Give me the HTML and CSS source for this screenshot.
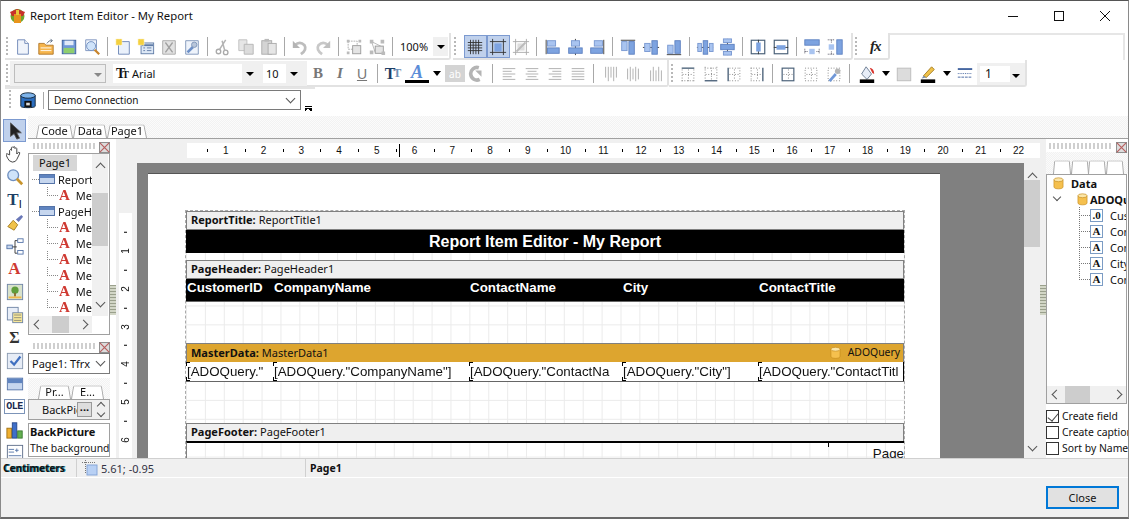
FILE: index.html
```html
<!DOCTYPE html>
<html lang="en">
  <head>
    <meta charset="UTF-8" />
    <title>Report Item Editor - My Report</title>
    <link rel="stylesheet" href="styles.css">
  </head>
  <body>
    <svg class="defs" width="0" height="0">
      <symbol id="new" viewBox="0 0 20 20"><path d="M4 2h8l4 4v12H4z" fill="#f0f4fb" stroke="#6b85b5"/><path d="M12 2v4h4" fill="#fff" stroke="#6b85b5"/></symbol>
      <symbol id="open" viewBox="0 0 20 20"><path d="M2 6h6l2 2h8v10H2z" fill="#f6b54c" stroke="#b0762a"/><path d="M4 11h12M4 14h12" stroke="#fff"/><path d="M11 6q2-4 6-3M15 1l2 2-2 2" stroke="#5a6a80" fill="none"/></symbol>
      <symbol id="save" viewBox="0 0 20 20"><rect x="2.5" y="2.5" width="15" height="15" fill="#7098d8" stroke="#3d5f9c"/><rect x="5" y="3" width="10" height="5" fill="#e2eaf8"/><rect x="4" y="11" width="12" height="6" fill="#8fce6e"/></symbol>
      <symbol id="preview" viewBox="0 0 20 20"><path d="M3 2h12v12H3z" fill="#eef3fb" stroke="#7c93bd"/><circle cx="9" cy="9" r="5" fill="#cfe3fa" stroke="#6f8fbf"/><path d="M13 13l5 5" stroke="#c8842c" stroke-width="2.5"/></symbol>
      <symbol id="newpage" viewBox="0 0 20 20"><path d="M5 4h12v14H5z" fill="#eaf1fb" stroke="#6b85b5"/><rect x="2" y="1" width="7" height="7" fill="#f4d03f" stroke="#fff" stroke-dasharray="1 1"/></symbol>
      <symbol id="newdlg" viewBox="0 0 20 20"><rect x="4.5" y="5.5" width="14" height="12" fill="#dde8f6" stroke="#5f7ba6"/><path d="M5 8h13" stroke="#5f7ba6" stroke-width="2"/><path d="M7 11h2M7 14h2M11 11h5M11 14h5" stroke="#5f7ba6"/><rect x="1" y="1" width="7" height="7" fill="#f4d03f" stroke="#fff" stroke-dasharray="1 1"/></symbol>
      <symbol id="delpage" viewBox="0 0 20 20"><path d="M3 3h14v15H3z" fill="#e2e2e2" stroke="#a8a8a8"/><path d="M6 5l8 11M14 5L6 16" stroke="#a0a0a0" stroke-width="1.5"/></symbol>
      <symbol id="pageopt" viewBox="0 0 20 20"><path d="M3 3h14v15H3z" fill="#eef3fb" stroke="#7d94b8"/><path d="M5 16l6-6" stroke="#6d90c8" stroke-width="3"/><circle cx="12.5" cy="7.5" r="3" fill="#b8c6da" stroke="#7d94b8"/></symbol>
      <symbol id="cut" viewBox="0 0 20 20"><circle cx="5" cy="15" r="2.5" fill="none" stroke="#aaa" stroke-width="1.5"/><circle cx="13" cy="16" r="2.5" fill="none" stroke="#aaa" stroke-width="1.5"/><path d="M6 13l7-11M12 14L9 3" stroke="#b4b4b4" stroke-width="1.7"/></symbol>
      <symbol id="copy" viewBox="0 0 20 20"><path d="M2 2h9v12H2z" fill="#e6e6e6" stroke="#c0c0c0"/><path d="M8 7h10v11H8z" fill="#dcdcdc" stroke="#b4b4b4"/></symbol>
      <symbol id="paste" viewBox="0 0 20 20"><rect x="2" y="3" width="11" height="15" fill="#d4d4d4" stroke="#aaa"/><rect x="9" y="6" width="9" height="12" fill="#e6e6e6" stroke="#aaa"/><rect x="5" y="1" width="5" height="3" fill="#bbb"/></symbol>
      <symbol id="undo" viewBox="0 0 20 20"><path d="M4 8q6-5 11 0q3 5-4 10" fill="none" stroke="#bdbdbd" stroke-width="3"/><path d="M2 3v8h8z" fill="#b4b4b4"/></symbol>
      <symbol id="redo" viewBox="0 0 20 20"><path d="M16 8q-6-5-11 0q-3 5 4 10" fill="none" stroke="#c8c8c8" stroke-width="3"/><path d="M18 3v8h-8z" fill="#c0c0c0"/></symbol>
      <symbol id="group" viewBox="0 0 20 20"><rect x="3.5" y="3.5" width="10" height="9" fill="none" stroke="#aaa" stroke-dasharray="2 1"/><rect x="8.5" y="8.5" width="9" height="9" fill="#e4e4e4" stroke="#999"/><path d="M2 2h3v3H2zM15 2h3v3h-3zM2 15h3v3H2z" fill="#bbb"/></symbol>
      <symbol id="ungroup" viewBox="0 0 20 20"><path d="M4 4l12 6M4 4l4 12M16 10l-2 7" stroke="#b4b4b4"/><rect x="8" y="9" width="9" height="8" fill="#e4e4e4" stroke="#999"/><path d="M2 2h4v4H2zM14 2h4v4h-4zM2 14h4v4H2zM15 15h4v4h-4z" fill="#bbb"/></symbol>
      <symbol id="grid" viewBox="0 0 20 20"><path d="M2 5h16M2 8h16M2 11h16M2 14h16M5 2v16M8 2v16M11 2v16M14 2v16" stroke="#333"/></symbol>
      <symbol id="snap" viewBox="0 0 20 20"><rect x="6" y="6" width="8" height="9" fill="#7da3e0"/><path d="M1 4h18M1 16h18M4 1v18M16 1v18" stroke="#333"/></symbol>
      <symbol id="fit" viewBox="0 0 20 20"><path d="M1 4h18M1 16h18M4 1v18M16 1v18" stroke="#aaa"/><rect x="6" y="6" width="8" height="8" fill="#ddd"/><path d="M5 15L15 5" stroke="#bbb" stroke-width="2"/></symbol>
      <symbol id="al" viewBox="0 0 20 20"><path d="M3.5 2v16" stroke="#333"/><rect x="5" y="3" width="9" height="6" fill="#a9c4f0" stroke="#7797d0"/><rect x="5" y="11" width="13" height="6" fill="#7da3e0" stroke="#5c80c0"/></symbol>
      <symbol id="ac" viewBox="0 0 20 20"><path d="M10.5 1v18" stroke="#333"/><rect x="6" y="3" width="9" height="6" fill="#a9c4f0" stroke="#7797d0"/><rect x="3" y="11" width="15" height="6" fill="#7da3e0" stroke="#5c80c0"/></symbol>
      <symbol id="ar" viewBox="0 0 20 20"><path d="M17.5 2v16" stroke="#333"/><rect x="7" y="3" width="9" height="6" fill="#a9c4f0" stroke="#7797d0"/><rect x="3" y="11" width="13" height="6" fill="#7da3e0" stroke="#5c80c0"/></symbol>
      <symbol id="at" viewBox="0 0 20 20"><path d="M2 2.5h16" stroke="#333"/><rect x="3" y="4" width="6" height="10" fill="#a9c4f0" stroke="#7797d0"/><rect x="11" y="4" width="6" height="14" fill="#7da3e0" stroke="#5c80c0"/></symbol>
      <symbol id="am" viewBox="0 0 20 20"><path d="M1 10.5h18" stroke="#333"/><rect x="3" y="6" width="6" height="9" fill="#a9c4f0" stroke="#7797d0"/><rect x="11" y="3" width="6" height="15" fill="#7da3e0" stroke="#5c80c0"/></symbol>
      <symbol id="ab" viewBox="0 0 20 20"><path d="M2 18.5h16" stroke="#333"/><rect x="3" y="8" width="6" height="9" fill="#a9c4f0" stroke="#7797d0"/><rect x="11" y="3" width="6" height="14" fill="#7da3e0" stroke="#5c80c0"/></symbol>
      <symbol id="sh" viewBox="0 0 20 20"><path d="M1 10.5h18M10.5 6v9" stroke="#444"/><rect x="2" y="6" width="4" height="9" fill="#a9c4f0" stroke="#7797d0"/><rect x="8" y="3" width="5" height="15" fill="#7da3e0" stroke="#5c80c0"/><rect x="15" y="6" width="4" height="9" fill="#a9c4f0" stroke="#7797d0"/></symbol>
      <symbol id="sv" viewBox="0 0 20 20"><path d="M10.5 1v18" stroke="#444"/><rect x="6" y="1" width="9" height="4" fill="#a9c4f0" stroke="#7797d0"/><rect x="3" y="7" width="15" height="6" fill="#7da3e0" stroke="#5c80c0"/><rect x="6" y="15" width="9" height="4" fill="#a9c4f0" stroke="#7797d0"/></symbol>
      <symbol id="ch" viewBox="0 0 20 20"><rect x="2.5" y="2.5" width="15" height="15" fill="#fff" stroke="#4a6078" stroke-width="1.3"/><path d="M10.5 2v16" stroke="#333"/><rect x="8" y="5" width="5" height="10" fill="#7da3e0"/></symbol>
      <symbol id="cv" viewBox="0 0 20 20"><rect x="2.5" y="2.5" width="15" height="15" fill="#fff" stroke="#4a6078" stroke-width="1.3"/><path d="M2 10.5h16" stroke="#333"/><rect x="5" y="8" width="10" height="5" fill="#7da3e0"/></symbol>
      <symbol id="sw" viewBox="0 0 20 20"><rect x="2" y="2" width="16" height="6" fill="#7da3e0" stroke="#5c80c0"/><rect x="7" y="12" width="6" height="6" fill="#a9c4f0"/><path d="M2 15h3M15 15h3M2 12v6M18 12v6" stroke="#445" stroke-dasharray="1 1"/></symbol>
      <symbol id="shh" viewBox="0 0 20 20"><rect x="12" y="2" width="6" height="16" fill="#7da3e0" stroke="#5c80c0"/><rect x="3" y="7" width="6" height="6" fill="#a9c4f0"/><path d="M6 2v3M6 15v3M2 2h7M2 18h7" stroke="#445" stroke-dasharray="1 1"/></symbol>
      <symbol id="tl" viewBox="0 0 20 20"><path d="M3 4h14M3 7h10M3 10h14M3 13h10M3 16h14" stroke="#aaa"/></symbol>
      <symbol id="tc" viewBox="0 0 20 20"><path d="M3 4h14M5 7h10M3 10h14M5 13h10M3 16h14" stroke="#aaa"/></symbol>
      <symbol id="tr" viewBox="0 0 20 20"><path d="M3 4h14M7 7h10M3 10h14M7 13h10M3 16h14" stroke="#aaa"/></symbol>
      <symbol id="tj" viewBox="0 0 20 20"><path d="M3 4h14M3 7h14M3 10h14M3 13h14M3 16h14" stroke="#aaa"/></symbol>
      <symbol id="vt" viewBox="0 0 20 20"><path d="M4 2v12M7 2v16M10 2v12M13 2v16M16 2v12" stroke="#aaa"/></symbol>
      <symbol id="vc" viewBox="0 0 20 20"><path d="M4 4v12M7 2v16M10 4v12M13 2v16M16 4v12" stroke="#aaa"/></symbol>
      <symbol id="vb" viewBox="0 0 20 20"><path d="M4 6v12M7 2v16M10 6v12M13 2v16M16 6v12" stroke="#aaa"/></symbol>
      <symbol id="ft" viewBox="0 0 20 20"><path d="M3 3.5h14" stroke="#4a6078" stroke-width="1.5"/><path d="M3.5 5v13M16.5 5v13M3 17.5h14M10.5 5v13M4 10.5h12" stroke="#777" stroke-dasharray="1 2"/></symbol>
      <symbol id="fb" viewBox="0 0 20 20"><path d="M3 17.5h14" stroke="#4a6078" stroke-width="1.5"/><path d="M3.5 2v14M16.5 2v14M3 3.5h14M10.5 3v13M4 10.5h12" stroke="#777" stroke-dasharray="1 2"/></symbol>
      <symbol id="fl" viewBox="0 0 20 20"><path d="M3.5 3v15" stroke="#4a6078" stroke-width="1.5"/><path d="M5 3.5h12M5 17.5h12M16.5 3v15M10.5 5v11M5 10.5h11" stroke="#777" stroke-dasharray="1 2"/></symbol>
      <symbol id="fr" viewBox="0 0 20 20"><path d="M16.5 3v15" stroke="#4a6078" stroke-width="1.5"/><path d="M3 3.5h12M3 17.5h12M3.5 3v15M10.5 5v11M4 10.5h11" stroke="#777" stroke-dasharray="1 2"/></symbol>
      <symbol id="fa" viewBox="0 0 20 20"><rect x="3.5" y="3.5" width="13" height="14" fill="none" stroke="#4a6078" stroke-width="1.3"/><path d="M10.5 5v11M5 10.5h11" stroke="#777" stroke-dasharray="1 2"/></symbol>
      <symbol id="fn" viewBox="0 0 20 20"><rect x="3.5" y="3.5" width="13" height="14" fill="none" stroke="#777" stroke-dasharray="1 2"/><path d="M10.5 5v11M5 10.5h11" stroke="#777" stroke-dasharray="1 2"/></symbol>
      <symbol id="fs" viewBox="0 0 20 20"><rect x="3.5" y="3.5" width="13" height="14" fill="none" stroke="#777" stroke-dasharray="1 2"/><path d="M5 18l7-8" stroke="#7098d8" stroke-width="3"/><circle cx="14" cy="7" r="3" fill="#b5b5b5"/></symbol>
      <symbol id="fill" viewBox="0 0 20 20"><path d="M9 2l6 8-5 6-6-6z" fill="#e8eef8" stroke="#66788f"/><path d="M13 3q5 1 5 7l-2-1z" fill="#d8322a"/><rect x="2" y="16" width="16" height="4" fill="#000"/></symbol>
      <symbol id="square" viewBox="0 0 20 20"><rect x="2.5" y="3.5" width="15" height="14" fill="#dcdcdc" stroke="#bbb"/></symbol>
      <symbol id="pen" viewBox="0 0 20 20"><path d="M5 12l9-10 3 3-9 9z" fill="#f0c24a" stroke="#a27a20"/><path d="M3 15l2-3 3 2z" fill="#7a90b4"/><rect x="2" y="16" width="16" height="4" fill="#000"/></symbol>
      <symbol id="lines" viewBox="0 0 20 20"><path d="M2 4.5h16" stroke="#3d5f9c" stroke-width="2"/><path d="M2 9.5h16" stroke="#3d5f9c" stroke-dasharray="1 1"/><path d="M2 13.5h16" stroke="#3d5f9c" stroke-dasharray="3 1"/></symbol>
      <symbol id="rotate" viewBox="0 0 20 20"><path d="M12 3a7 7 0 1 0 1 13" fill="none" stroke="#b4b4b4" stroke-width="4"/><path d="M8 6h7v7z" fill="#b4b4b4"/></symbol>
      <symbol id="db" viewBox="0 0 20 20"><path d="M3 5v11c0 4 14 4 14 0V5z" fill="#f5c04e" stroke="#c58a1c"/><ellipse cx="10" cy="5" rx="7" ry="3" fill="#fbe6a8" stroke="#c58a1c"/></symbol>
      <symbol id="conn" viewBox="0 0 20 20"><path d="M2 5v12c0 2 16 2 16 0V5z" fill="#2d6fc0" stroke="#123"/><ellipse cx="10" cy="5" rx="8" ry="3" fill="#7db3ea" stroke="#123"/><rect x="6" y="11" width="8" height="7" fill="#111"/><rect x="8" y="13" width="4" height="3" fill="#ddd"/></symbol>
      <symbol id="bandi" viewBox="0 0 16 10"><rect x="0.5" y="0.5" width="15" height="9" fill="#c6d6ee" stroke="#5574a8"/><rect x="1" y="1" width="14" height="3" fill="#5f84c0"/></symbol>
      <symbol id="closebox" viewBox="0 0 12 12"><rect x="0.5" y="0.5" width="11" height="11" fill="#ddd" stroke="#888"/><path d="M1 1l10 10M11 1L1 11" stroke="#b86060" stroke-width="1.3"/></symbol>
      <symbol id="arrow" viewBox="0 0 20 20"><path d="M5 1v15l4-3 3 6 3-1-3-6h5z" fill="#222" stroke="#555"/></symbol>
      <symbol id="hand" viewBox="0 0 20 20"><path d="M4 11V6q1-2 2 0V3q1-2 2 0v-.5q1-1.500 2 0V4q1-2 2 0v6l2-2q2 0 1 2l-3 6q-1 3-5 3-4-1-5-4l-2-4q0-2 2-1z" fill="#fff" stroke="#333"/></symbol>
      <symbol id="zoom" viewBox="0 0 20 20"><circle cx="8" cy="8" r="6" fill="#cfe3fa" stroke="#6f8fbf" stroke-width="1.5"/><path d="M12 12l6 6" stroke="#c8942c" stroke-width="3"/></symbol>
      <symbol id="brush" viewBox="0 0 20 20"><path d="M2 14l6-7 5 5-4 6z" fill="#f0c24a" stroke="#a27a20"/><path d="M11 6l6-5 2 2-5 6z" fill="#6a78b8"/></symbol>
      <symbol id="tree" viewBox="0 0 20 20"><rect x="1" y="9" width="6" height="4" fill="#c6d6ee" stroke="#5574a8"/><path d="M7 11h5M10 4v14M10 4h3M10 18h3" stroke="#333"/><rect x="13" y="2" width="6" height="4" fill="#fff" stroke="#5574a8"/><rect x="13" y="15" width="6" height="4" fill="#fff" stroke="#5574a8"/></symbol>
      <symbol id="pic" viewBox="0 0 20 20"><rect x="1.5" y="1.5" width="17" height="17" fill="#d8e2cc" stroke="#6f84a4"/><circle cx="10" cy="8" r="4" fill="#5f9e3c"/><rect x="9" y="11" width="2" height="4" fill="#8a6a2c"/><rect x="3" y="15" width="14" height="2" fill="#f0b84a"/></symbol>
      <symbol id="subrep" viewBox="0 0 20 20"><rect x="1.5" y="1.5" width="12" height="14" fill="#e8eef8" stroke="#6f84a4"/><rect x="7.5" y="7.5" width="11" height="11" fill="#f8e89a" stroke="#6f84a4"/><path d="M9 10h8M9 13h8M9 16h8" stroke="#887"/></symbol>
      <symbol id="checkbox" viewBox="0 0 20 20"><rect x="1.5" y="1.5" width="17" height="17" fill="#e6ecf6" stroke="#8898b0"/><path d="M5 10l4 4 7-9" fill="none" stroke="#3f6fc0" stroke-width="2.5"/></symbol>
      <symbol id="bandtool" viewBox="0 0 20 20"><rect x="1.5" y="3.5" width="17" height="13" fill="#c6d6ee" stroke="#5574a8"/><rect x="2" y="4" width="16" height="5" fill="#5f84c0"/></symbol>
      <symbol id="chart" viewBox="0 0 20 20"><rect x="1" y="8" width="5" height="11" fill="#f0b030" stroke="#a07010"/><rect x="7" y="2" width="5" height="17" fill="#3f6fc8" stroke="#24478c"/><rect x="13" y="11" width="5" height="8" fill="#64b050" stroke="#3a7a30"/></symbol>
      <symbol id="cross" viewBox="0 0 20 20"><rect x="1.5" y="1.5" width="17" height="17" fill="#fff" stroke="#5c6c88"/><path d="M3 6h6M3 9h6M12 5v4M10 7h4M3 13h14M3 16h14" stroke="#5574a8"/></symbol>
      <symbol id="coord" viewBox="0 0 16 16"><path d="M0 2.5h14M3.5 0v14" stroke="#777" stroke-dasharray="1 1"/><rect x="5" y="5" width="10" height="10" fill="#b8d0f4" stroke="#86a6d8"/></symbol>
    </svg>

    <div class="window">
      <div class="titlebar">
        <svg class="appicon" width="17" height="17" viewBox="0 0 17 17">
          <circle cx="8.5" cy="9" r="7" fill="#6fa52c"/>
          <path d="M1 5l7-3 8 3-2 4H3z" fill="#c8322a"/>
          <path d="M5 7h7v9H5z" fill="#e8941c"/>
          <path d="M7 3h3v5H7z" fill="#e8c83c"/>
        </svg>
        <span class="title">Report Item Editor - My Report</span>
        <div class="winbtns">
          <svg width="46" height="30" viewBox="0 0 46 30"><path d="M18 15.5h10" stroke="#111"/></svg>
          <svg width="46" height="30" viewBox="0 0 46 30"><rect x="18.5" y="10.5" width="9" height="9" fill="none" stroke="#111"/></svg>
          <svg width="46" height="30" viewBox="0 0 46 30"><path d="M18 10l10 10M28 10L18 20" stroke="#111"/></svg>
        </div>
      </div>

      <div class="tbrow row-one">
        <div class="tb">
          <i class="grip"></i>
          <div class="group wide">
            <span class="btn"><svg><use href="#new"/></svg></span>
            <span class="btn"><svg><use href="#open"/></svg></span>
            <span class="btn"><svg><use href="#save"/></svg></span>
            <span class="btn"><svg><use href="#preview"/></svg></span>
            <i class="sep"></i>
            <span class="btn"><svg><use href="#newpage"/></svg></span>
            <span class="btn"><svg><use href="#newdlg"/></svg></span>
            <span class="btn"><svg><use href="#delpage"/></svg></span>
            <span class="btn"><svg><use href="#pageopt"/></svg></span>
            <i class="sep"></i>
            <span class="btn"><svg><use href="#cut"/></svg></span>
            <span class="btn"><svg><use href="#copy"/></svg></span>
            <span class="btn"><svg><use href="#paste"/></svg></span>
            <i class="sep"></i>
            <span class="btn"><svg><use href="#undo"/></svg></span>
            <span class="btn"><svg><use href="#redo"/></svg></span>
            <i class="sep"></i>
            <span class="btn"><svg><use href="#group"/></svg></span>
            <span class="btn"><svg><use href="#ungroup"/></svg></span>
            <i class="sep"></i>
            <div class="tbcombo zoomcombo"><span>100%</span><b class="drop"></b></div>
          </div>
        </div>
        <div class="tb tb-align">
          <i class="grip"></i>
          <div class="group">
            <span class="btn on"><svg><use href="#grid"/></svg></span>
            <span class="btn on"><svg><use href="#snap"/></svg></span>
            <span class="btn"><svg><use href="#fit"/></svg></span>
            <i class="sep"></i>
            <span class="btn"><svg><use href="#al"/></svg></span>
            <span class="btn"><svg><use href="#ac"/></svg></span>
            <span class="btn"><svg><use href="#ar"/></svg></span>
            <i class="sep"></i>
            <span class="btn"><svg><use href="#at"/></svg></span>
            <span class="btn"><svg><use href="#am"/></svg></span>
            <span class="btn"><svg><use href="#ab"/></svg></span>
            <i class="sep"></i>
            <span class="btn"><svg><use href="#sh"/></svg></span>
            <span class="btn"><svg><use href="#sv"/></svg></span>
            <i class="sep"></i>
            <span class="btn"><svg><use href="#ch"/></svg></span>
            <span class="btn"><svg><use href="#cv"/></svg></span>
            <i class="sep"></i>
            <span class="btn"><svg><use href="#sw"/></svg></span>
            <span class="btn"><svg><use href="#shh"/></svg></span>
          </div>
        </div>
        <div class="tb tb-fx">
          <i class="grip"></i>
          <span class="fx">fx</span>
        </div>
        <div class="tb-rest"></div>
      </div>

      <div class="tbrow row-two">
        <div class="tb tb-text">
          <i class="grip"></i>
          <div class="combos">
            <div class="tbcombo stylecombo"><b class="drop grey"></b></div>
            <div class="tbcombo fontcombo"><span class="tt">T<small>T</small></span><span>Arial</span><b class="drop"></b></div>
            <div class="tbcombo sizecombo"><span>10</span><b class="drop"></b></div>
          </div>
          <span class="btn w22 letter bold">B</span>
          <span class="btn w22 letter italic">I</span>
          <span class="btn w22 letter under">U</span>
          <i class="sep"></i>
          <span class="btn w24 letter fontsize">T<small>T</small></span>
          <span class="btn w24 letter fontcolor">A</span>
          <span class="btn w16"><b class="drop bare"></b></span>
          <span class="btn w20 abbox">ab</span>
          <span class="btn w23"><svg><use href="#rotate"/></svg></span>
          <i class="sep"></i>
          <i class="gap2"></i>
          <span class="btn"><svg><use href="#tl"/></svg></span>
          <span class="btn"><svg><use href="#tc"/></svg></span>
          <span class="btn"><svg><use href="#tr"/></svg></span>
          <span class="btn"><svg><use href="#tj"/></svg></span>
          <i class="sep"></i>
          <i class="gap2"></i>
          <span class="btn"><svg><use href="#vt"/></svg></span>
          <span class="btn"><svg><use href="#vc"/></svg></span>
          <span class="btn"><svg><use href="#vb"/></svg></span>
        </div>
        <div class="tb tb-frame">
          <i class="grip"></i>
          <span class="btn w23"><svg><use href="#ft"/></svg></span>
          <span class="btn w23"><svg><use href="#fb"/></svg></span>
          <span class="btn w23"><svg><use href="#fl"/></svg></span>
          <span class="btn w23"><svg><use href="#fr"/></svg></span>
          <i class="sep"></i>
          <span class="btn w23"><svg><use href="#fa"/></svg></span>
          <span class="btn w23"><svg><use href="#fn"/></svg></span>
          <span class="btn w23"><svg><use href="#fs"/></svg></span>
          <i class="sep"></i>
          <span class="btn w27"><svg><use href="#fill"/></svg></span>
          <span class="btn w11"><b class="drop bare"></b></span>
          <span class="btn w25"><svg><use href="#square"/></svg></span>
          <span class="btn w23"><svg><use href="#pen"/></svg></span>
          <span class="btn w15"><b class="drop bare"></b></span>
          <span class="btn w21"><svg><use href="#lines"/></svg></span>
          <div class="tbcombo linecombo"><span>1</span><b class="drop"></b></div>
        </div>
      </div>

      <div class="tbrow row-three">
        <i class="grip"></i>
        <span class="connicon"><svg><use href="#conn"/></svg></span>
        <i class="sep"></i>
        <div class="conncombo"><span>Demo Connection</span><i class="chev"></i></div>
        <span class="overflow"></span>
      </div>

      <div class="body">
        <div class="tools">
          <span class="tool on"><svg><use href="#arrow"/></svg></span>
          <span class="tool"><svg><use href="#hand"/></svg></span>
          <span class="tool"><svg><use href="#zoom"/></svg></span>
          <span class="tool texttool">T<small>I</small></span>
          <span class="tool"><svg><use href="#brush"/></svg></span>
          <span class="tool"><svg><use href="#tree"/></svg></span>
          <span class="tool redA">A</span>
          <span class="tool"><svg><use href="#pic"/></svg></span>
          <span class="tool"><svg><use href="#subrep"/></svg></span>
          <span class="tool sigma">Σ</span>
          <span class="tool"><svg><use href="#checkbox"/></svg></span>
          <span class="tool"><svg><use href="#bandtool"/></svg></span>
          <span class="tool ole">OLE</span>
          <span class="tool"><svg><use href="#chart"/></svg></span>
          <span class="tool"><svg><use href="#cross"/></svg></span>
        </div>

        <div class="main">
          <div class="tabstrip">
            <span class="tab">Code</span>
            <span class="tab">Data</span>
            <span class="tab active">Page1</span>
          </div>

          <div class="work">
            <div class="leftpanel">
              <div class="panelgrip"><svg class="closebox"><use href="#closebox"/></svg></div>
              <div class="treebox">
                <div class="tree">
                  <div class="node selected"><span>Page1</span></div>
                  <div class="node lvl1"><svg class="bandi"><use href="#bandi"/></svg>Report</div>
                  <div class="node lvl2"><span class="redA small">A</span>Me</div>
                  <div class="node lvl1"><svg class="bandi"><use href="#bandi"/></svg>PageHe</div>
                  <div class="node lvl2"><span class="redA small">A</span>Me</div>
                  <div class="node lvl2"><span class="redA small">A</span>Me</div>
                  <div class="node lvl2"><span class="redA small">A</span>Me</div>
                  <div class="node lvl2"><span class="redA small">A</span>Me</div>
                  <div class="node lvl2"><span class="redA small">A</span>Me</div>
                  <div class="node lvl2"><span class="redA small">A</span>Me</div>
                </div>
                <div class="vscroll treescroll"><i class="chev up"></i><i class="thumb"></i><i class="chev"></i></div>
                <div class="hscroll treehscroll"><i class="chev left"></i><i class="thumb"></i><i class="chev right"></i></div>
              </div>
              <div class="panelgrip second"><svg class="closebox"><use href="#closebox"/></svg></div>
              <div class="objcombo"><span>Page1: Tfrx</span><i class="chev"></i></div>
              <div class="proptabs">
                <span class="tab">Pr...</span>
                <span class="tab">E...</span>
              </div>
              <div class="proprow">
                <span class="propname">BackPic</span>
                <span class="ellipsis">...</span>
                <span class="spin"><i class="chev up"></i><i class="chev"></i></span>
              </div>
              <div class="propdesc">
                <b>BackPicture</b>
                <span>The background</span>
              </div>
            </div>

            <div class="splitter left"><i></i></div>

            <div class="designer">
              <div class="rulerrow">
                <div class="hruler">
                  <span>1</span><span>2</span><span>3</span><span>4</span><span>5</span><span>6</span><span>7</span><span>8</span><span>9</span><span>10</span><span>11</span>
                  <span>12</span><span>13</span><span>14</span><span>15</span><span>16</span><span>17</span><span>18</span><span>19</span><span>20</span><span>21</span><span>22</span>
                  <i class="marker"></i>
                </div>
              </div>
              <div class="designrow">
                <div class="vgutter">
                  <div class="vruler">
                    <span>1</span><span>2</span><span>3</span><span>4</span><span>5</span><span>6</span>
                  </div>
                </div>
                <div class="canvas">
                  <div class="page">
                    <div class="report">
                      <div class="bandhead"><b>ReportTitle:</b> ReportTitle1</div>
                      <div class="titlebox">Report Item Editor - My Report</div>
                      <div class="bandgap"></div>
                      <div class="bandhead"><b>PageHeader:</b> PageHeader1</div>
                      <div class="cols headcols">
                        <span>CustomerID</span><span>CompanyName</span><span>ContactName</span><span>City</span><span>ContactTitle</span>
                      </div>
                      <div class="bandgap g41"></div>
                      <div class="bandhead master"><b>MasterData:</b> MasterData1
                        <span class="source"><svg><use href="#db"/></svg>ADOQuery</span>
                      </div>
                      <div class="cols datacols">
                        <span>[ADOQuery."</span><span>[ADOQuery."CompanyName"]</span><span>[ADOQuery."ContactNa</span><span>[ADOQuery."City"]</span><span>[ADOQuery."ContactTitl</span>
                      </div>
                      <div class="bandgap g41"></div>
                      <div class="bandhead"><b>PageFooter:</b> PageFooter1</div>
                      <div class="footer"><span class="footcell">Page</span></div>
                    </div>
                  </div>
                </div>
                <div class="vscroll mainscroll"><i class="chev up"></i><i class="thumb"></i><i class="chev"></i></div>
              </div>
            </div>

            <div class="splitter right"><i></i></div>

            <div class="rightpanel">
              <div class="panelgrip"><svg class="closebox"><use href="#closebox"/></svg></div>
              <div class="datatabs"><span class="tab"></span><span class="tab"></span><span class="tab"></span><span class="tab"></span></div>
              <div class="databox">
                <div class="datatree">
                  <div class="dnode"><svg class="dbi"><use href="#db"/></svg><b>Data</b></div>
                  <div class="dnode query"><i class="chev"></i><svg class="dbi"><use href="#db"/></svg><b>ADOQu</b></div>
                  <div class="dnode field"><span class="fieldi num">.0</span>Cus</div>
                  <div class="dnode field"><span class="fieldi">A</span>Con</div>
                  <div class="dnode field"><span class="fieldi">A</span>Con</div>
                  <div class="dnode field"><span class="fieldi">A</span>City</div>
                  <div class="dnode field"><span class="fieldi">A</span>Con</div>
                </div>
                <div class="hscroll datahscroll"><i class="chev left"></i><i class="thumb"></i><i class="chev right"></i></div>
              </div>
              <div class="checks">
                <label><i class="box checked"></i>Create field</label>
                <label><i class="box"></i>Create caption</label>
                <label><i class="box"></i>Sort by Name</label>
              </div>
            </div>
          </div>
        </div>
      </div>

      <div class="statusbar">
        <span class="st-units">Centimeters</span>
        <span class="st-pos"><svg width="16" height="16"><use href="#coord"/></svg>5.61; -0.95</span>
        <span class="st-page">Page1</span>
      </div>
      <div class="footerbar">
        <button class="closebtn">Close</button>
      </div>
    </div>
  </body>
</html>
```

FILE: styles.css
```css
* {
  box-sizing: border-box;
}
html,
body {
  margin: 0;
  height: 100%;
  overflow: hidden;
}
body {
  font-family: "Noto Sans", Tahoma, sans-serif;
  font-size: 11px;
  color: #111;
  background: #fff;
}
i {
  font-style: normal;
}
.defs {
  position: absolute;
}
.window {
  width: 1129px;
  height: 519px;
  display: flex;
  flex-direction: column;
  overflow: hidden;
  background: #fff;
  border-top: 1px solid #555;
  border-bottom: 2px solid #6a6a6a;
  border-left: 1px solid #8a8a8a;
  border-right: 1px solid #8a8a8a;
}

/* title bar */
.titlebar {
  height: 32px;
  flex: none;
  display: flex;
  align-items: center;
  padding: 0 0 3px 8px;
}
.title {
  margin-left: 4px;
  font-size: 11.3px;
}
.winbtns {
  margin-left: auto;
  display: flex;
}
.winbtns svg {
  display: block;
}

/* toolbars */
.tbrow {
  display: flex;
  flex: none;
  align-items: stretch;
}
.row-one {
  height: 27px;
  padding-left: 4px;
}
.row-two {
  height: 27px;
  padding-left: 4px;
}
.row-three {
  height: 29px;
  margin-left: 4px;
  width: 310px;
  border-top: 2px solid #e4e4e4;
  padding-bottom: 5px;
  align-items: center;
  position: relative;
}
.tb {
  display: flex;
  align-items: center;
  padding-top: 2px;
  border-right: 2px solid #e2e2e2;
  border-bottom: 2px solid #e2e2e2;
  border-radius: 0 0 3px 0;
}
.grip {
  width: 2px;
  height: 20px;
  flex: none;
  margin-left: 1px;
  background: repeating-linear-gradient(#b8b8b8 0 2px, transparent 2px 4px);
}
.group {
  display: flex;
  align-items: center;
  height: 100%;
}
.row-one .tb:first-child {
  width: 446px;
}
.row-one .tb:first-child .group {
  margin-left: 3px;
}
.tb-align {
  width: 400px;
  margin-left: 2px;
}
.tb-align .group {
  margin-left: 8px;
}
.tb-fx {
  width: 36px;
  margin-left: 1px;
}
.tb-rest {
  flex: 1;
  margin-right: 3px;
  border-top: 2px solid #e6e6e6;
  border-right: 2px solid #e6e6e6;
}
.fx {
  margin-left: 13px;
  font: italic bold 15px "Liberation Serif", serif;
  letter-spacing: -1px;
  color: #222;
}
.btn {
  width: 22.8px;
  height: 23px;
  flex: none;
  display: flex;
  align-items: center;
  justify-content: center;
}
.wide .btn {
  width: 23px;
}
.btn svg,
.tool svg,
.connicon svg {
  width: 18px;
  height: 18px;
  display: block;
}
.btn.on {
  background: #c0d1ec;
  border: 1px solid #7c9ad0;
}
.w11 {
  width: 11px;
}
.w15 {
  width: 15px;
}
.w16 {
  width: 16px;
}
.w20 {
  width: 20px;
}
.w21 {
  width: 21px;
}
.w22 {
  width: 22px;
}
.w23 {
  width: 23px;
}
.w24 {
  width: 24px;
}
.w25 {
  width: 25px;
}
.w27 {
  width: 27px;
}
.sep {
  width: 8px;
  flex: none;
  height: 19px;
  background: linear-gradient(#a8a8a8, #a8a8a8) center / 1px 100% no-repeat;
}
.gap2 {
  width: 2px;
  flex: none;
}
.tb-text {
  width: 664px;
}
.tb-frame {
  width: 358px;
}
.tb-frame .grip {
  margin: 0 3.5px 0 2px;
}
.combos {
  display: flex;
  align-items: center;
  width: 298px;
  height: 25px;
  margin-left: 2px;
  padding: 0 6px 0 4px;
  background: #f0f0f0;
}
.tbcombo {
  height: 19px;
  display: flex;
  align-items: center;
  background: #fff;
  position: relative;
  flex: none;
  font-size: 11px;
}
.drop {
  position: absolute;
  right: 0;
  top: 0;
  bottom: 0;
  width: 15px;
  background: #f0f0f0;
}
.drop::after {
  content: "";
  position: absolute;
  left: 4px;
  top: 8px;
  border: 4px solid transparent;
  border-top: 4px solid #000;
  border-bottom: 0;
}
.drop.grey {
  background: none;
}
.drop.grey::after {
  border-top-color: #888;
}
.drop.bare {
  position: relative;
  display: block;
  width: 9px;
  height: 6px;
  background: none;
}
.drop.bare::after {
  left: 0;
  top: 0;
  border-width: 5px 4.5px 0;
}
.zoomcombo {
  width: 51px;
  margin-left: 1px;
  padding-left: 3px;
}
.stylecombo {
  width: 92px;
  background: #eee;
  border: 1px solid #bdbdbd;
}
.fontcombo {
  width: 144px;
  margin-left: 7px;
  padding-left: 3px;
}
.sizecombo {
  width: 38px;
  margin-left: 6px;
  padding-left: 3px;
}
.tt {
  font: bold 14px "Liberation Serif", serif;
  margin-right: 3px;
  white-space: nowrap;
}
.tt small {
  font-size: 10px;
  margin-left: -3px;
}
.letter {
  font-family: "Liberation Serif", serif;
  font-size: 15px;
  color: #777;
}
.bold {
  font-weight: bold;
}
.italic {
  font-style: italic;
  font-weight: bold;
}
.under {
  text-decoration: underline;
  font-family: "Liberation Sans", sans-serif;
  font-size: 14px;
}
.fontsize {
  font-weight: bold;
  color: #1e3f66;
  font-size: 16px;
}
.fontsize small {
  font-size: 12px;
  margin-left: -2px;
  color: #6f8fb5;
}
.fontcolor {
  font-weight: bold;
  font-style: italic;
  font-size: 18px;
  color: #5b8dd8;
  border-bottom: 3px solid #000;
  height: 18px;
  line-height: 15px;
  align-items: flex-start;
}
.abbox {
  width: 20px;
  height: 17px;
  background: #d4d4d4;
  color: #fff;
  font-size: 10px;
}
.linecombo {
  width: 48px;
  height: 22px;
  margin-left: 1.5px;
  padding-left: 5px;
  border: 3px solid #f0f0f0;
  font-size: 12px;
}
.linecombo .drop {
  width: 12px;
}
.linecombo .drop::after {
  left: 2px;
}
.row-three .grip {
  margin-left: 4px;
}
.connicon {
  margin-left: 8px;
  width: 18px;
  height: 18px;
}
.row-three .sep {
  margin-left: 2px;
  width: 8px;
  height: 17px;
}
.conncombo {
  width: 253px;
  height: 20px;
  margin-left: 1px;
  border: 1px solid #7a7a7a;
  padding: 0 6px 0 5px;
  display: flex;
  align-items: center;
  justify-content: space-between;
  font-size: 10px;
}
.chev {
  display: block;
  width: 7px;
  height: 7px;
  flex: none;
  border-right: 1.5px solid #555;
  border-bottom: 1.5px solid #555;
  transform: translateY(-2px) rotate(45deg);
}
.chev.up {
  transform: translateY(2px) rotate(225deg);
}
.chev.left {
  transform: rotate(135deg);
}
.chev.right {
  transform: rotate(-45deg);
}
.overflow {
  position: absolute;
  left: 300px;
  bottom: 5px;
  width: 7px;
  height: 5px;
  border-top: 1px solid #000;
  background: linear-gradient(135deg, #000 50%, transparent 50%) 0 1px / 4px 4px no-repeat, linear-gradient(225deg, #000 50%, transparent 50%) 3px 1px / 4px 4px no-repeat;
}

/* body */
.body {
  flex: 1;
  display: flex;
  min-height: 0;
}
.tools {
  width: 27px;
  flex: none;
  padding: 3px 0 0 2px;
  display: flex;
  flex-direction: column;
  overflow: hidden;
}
.tool {
  width: 23px;
  height: 23px;
  flex: none;
  display: flex;
  align-items: center;
  justify-content: center;
}
.tool.on {
  background: #c0d1ec;
  border: 1px solid #7c9ad0;
}
.texttool {
  font: bold 17px "Liberation Serif", serif;
  color: #1e3f66;
}
.texttool small {
  font: 11px "Liberation Sans", sans-serif;
  color: #111;
  margin-top: 8px;
}
.redA {
  font: bold 17px "Liberation Serif", serif;
  color: #cf3a32;
}
.redA.small {
  font-size: 15px;
  display: inline-block;
  width: 14px;
  margin-right: 5px;
  text-align: center;
  line-height: 16px;
}
.sigma {
  font: bold 16px "Liberation Serif", serif;
  color: #333;
}
.ole {
  font: bold 10px "Liberation Mono", monospace;
  color: #1a2a50;
  letter-spacing: -0.5px;
  height: 15px;
  margin: 4px 0 4px 1px;
  border: 1px solid #7c94b8;
  width: 21px;
}
.main {
  flex: 1;
  min-width: 0;
  display: flex;
  flex-direction: column;
}
.tabstrip {
  height: 23px;
  flex: none;
  display: flex;
  align-items: flex-end;
  padding-left: 8px;
  border-bottom: 1px solid #a0a0a0;
  background: repeating-conic-gradient(#f2f2f2 0 25%, #fbfbfb 0 50%) 0 0 / 2px 2px;
}
.tab {
  position: relative;
  height: 16px;
  padding: 0 5px;
  display: flex;
  align-items: center;
  justify-content: center;
  z-index: 0;
}
.tab::before {
  content: "";
  position: absolute;
  inset: 0;
  z-index: -1;
  background: #fff;
  border: 1px solid #a8a8a8;
  border-bottom: 0;
  transform: perspective(24px) rotateX(14deg);
  transform-origin: bottom;
  border-radius: 2px 2px 0 0;
}
.tabstrip .tab:nth-child(1) {
  width: 37px;
}
.tabstrip .tab:nth-child(2) {
  width: 34px;
}
.tabstrip .tab:nth-child(3) {
  width: 40px;
}
.work {
  flex: 1;
  display: flex;
  min-height: 0;
}

/* left panel */
.leftpanel {
  width: 82px;
  flex: none;
  display: flex;
  flex-direction: column;
}
.panelgrip {
  height: 14px;
  flex: none;
  position: relative;
  background: repeating-linear-gradient(90deg, #cfcfcf 0 2px, transparent 2px 4px) 5px 4px / 62px 6px no-repeat;
}
.panelgrip .closebox {
  position: absolute;
  right: 0;
  top: 3px;
  width: 11px;
  height: 11px;
}
.treebox {
  height: 182px;
  flex: none;
  border: 1px solid #a0a0a0;
  position: relative;
  overflow: hidden;
}
.tree {
  width: 63px;
  overflow: hidden;
  white-space: nowrap;
  padding-top: 1px;
}
.node {
  height: 16px;
  display: flex;
  align-items: center;
  overflow: hidden;
}
.node.selected {
  padding-left: 4px;
}
.node.selected span {
  background: #d6d6d6;
  padding: 0 6px;
  height: 16px;
  line-height: 16px;
}
.lvl1 {
  padding-left: 10px;
  background: repeating-linear-gradient(90deg, #888 0 1px, transparent 1px 2px) 3px 50% / 7px 1px no-repeat;
}
.bandi {
  width: 16px;
  height: 10px;
  margin-right: 3px;
  flex: none;
}
.lvl2 {
  padding-left: 29px;
  background: repeating-linear-gradient(90deg, #888 0 1px, transparent 1px 2px) 18px 50% / 11px 1px no-repeat, repeating-linear-gradient(#888 0 1px, transparent 1px 2px) 18px 0 / 1px 8px no-repeat;
}
.vscroll {
  display: flex;
  flex-direction: column;
  align-items: center;
  background: #f0f0f0;
}
.vscroll .thumb {
  background: #cdcdcd;
  width: 100%;
  flex: none;
}
.hscroll {
  display: flex;
  align-items: center;
  background: #f0f0f0;
}
.hscroll .thumb {
  background: #cdcdcd;
  height: 100%;
  flex: none;
}
.treescroll {
  position: absolute;
  left: 63px;
  top: 0;
  width: 16px;
  height: 162px;
  padding-top: 8px;
}
.treescroll .thumb {
  height: 53px;
  margin: 24px 0 55px;
}
.treehscroll {
  position: absolute;
  left: 0;
  top: 162px;
  width: 63px;
  height: 17px;
  padding-left: 6px;
}
.treehscroll .thumb {
  width: 17px;
  margin: 0 11px 0 10px;
}
.panelgrip.second {
  margin-top: 4px;
}
.objcombo {
  height: 21px;
  flex: none;
  border: 1px solid #7a7a7a;
  display: flex;
  align-items: center;
  padding: 0 5px 0 3px;
  white-space: nowrap;
  overflow: hidden;
}
.objcombo span {
  width: 59px;
  overflow: hidden;
  margin-right: 6px;
}
.proptabs {
  height: 21px;
  flex: none;
  margin-top: 4px;
  padding-left: 10px;
  display: flex;
  align-items: flex-end;
  background: repeating-conic-gradient(#f2f2f2 0 25%, #fbfbfb 0 50%) 0 0 / 2px 2px;
}
.proptabs .tab {
  width: 33px;
}
.proprow {
  height: 21px;
  flex: none;
  border: 1px solid #a0a0a0;
  background: #f0f0f0;
  display: flex;
  align-items: center;
  padding-left: 13px;
}
.propname {
  width: 35px;
  overflow: hidden;
}
.ellipsis {
  width: 15px;
  height: 15px;
  background: #ddd;
  border: 1px solid #999;
  line-height: 8px;
  text-align: center;
  font-weight: bold;
  flex: none;
}
.spin {
  flex: 1;
  display: flex;
  flex-direction: column;
  align-items: center;
  gap: 5px;
}
.spin .chev {
  width: 6px;
  height: 6px;
}
.propdesc {
  height: 34px;
  flex: none;
  margin-top: 3px;
  border: 1px solid #a0a0a0;
  padding-left: 1px;
  display: flex;
  flex-direction: column;
  overflow: hidden;
  white-space: nowrap;
  line-height: 16px;
}
.propdesc span {
  font-size: 10.4px;
}

/* splitters */
.splitter {
  width: 6px;
  flex: none;
  display: flex;
  flex-direction: column;
}
.splitter i {
  display: block;
  height: 30px;
  margin-top: 146px;
  background: repeating-linear-gradient(#9aa08c 0 1px, #d2d6c6 1px 3px);
}
.splitter.left {
  background: #fff;
}
.splitter.right {
  background: #f0f0f0;
}

/* designer */
.designer {
  flex: 1;
  min-width: 0;
  display: flex;
  flex-direction: column;
  background: #f0f0f0;
}
.rulerrow {
  height: 24px;
  flex: none;
  padding: 4px 0 5px 71px;
}
.hruler {
  position: relative;
  height: 15px;
  background: #fff;
  padding-left: 20px;
  display: flex;
  overflow: hidden;
}
.hruler span {
  width: 37.75px;
  flex: none;
  text-align: center;
  font: 10px/15px "Liberation Sans", sans-serif;
  background: linear-gradient(#000, #000) 0 6px / 1px 3px no-repeat;
}
.marker {
  position: absolute;
  left: 212px;
  top: 1px;
  width: 1px;
  height: 13px;
  background: #000;
}
.designrow {
  flex: 1;
  display: flex;
  min-height: 0;
}
.vgutter {
  width: 21px;
  flex: none;
  padding: 50px 5px 0 3px;
}
.vruler {
  height: 100%;
  background: #fff;
  padding-top: 19px;
  overflow: hidden;
}
.vruler span {
  height: 37.75px;
  display: flex;
  align-items: center;
  justify-content: center;
  writing-mode: vertical-rl;
  transform: rotate(180deg);
  font: 10px/13px "Liberation Sans", sans-serif;
  background: linear-gradient(#000, #000) 5px 100% / 3px 1px no-repeat;
}
.canvas {
  width: 887px;
  flex: none;
  background: #808080;
  padding: 10px 0 0 11px;
  overflow: hidden;
}
.page {
  width: 792px;
  height: 100%;
  background: #fff;
  border-top: 1px solid #555;
  padding: 36px 0 0 37px;
  overflow: hidden;
}
.report {
  width: 720px;
  height: 400px;
  border: 1px dashed #aaa;
  border-bottom: 0;
  background-image: linear-gradient(#ebebeb 1px, transparent 1px), linear-gradient(90deg, #ebebeb 1px, transparent 1px);
  background-size: 18.9px 18.9px;
}
.bandhead {
  height: 19px;
  display: flex;
  align-items: center;
  gap: 3px;
  padding: 0 0 2px 4px;
  background: #efefef;
  border: 1px solid #808080;
  white-space: nowrap;
}
.master {
  background: #dda52f;
  border-bottom: 0;
}
.source {
  margin-left: auto;
  margin-right: 3px;
  display: flex;
  align-items: center;
  gap: 6px;
  font-size: 10.4px;
}
.source svg {
  width: 13px;
  height: 15px;
}
.titlebox {
  height: 23px;
  background: #000;
  color: #fff;
  text-align: center;
  font: bold 16px/23px "Liberation Sans", sans-serif;
}
.bandgap {
  height: 7px;
}
.bandgap.g41 {
  height: 41px;
}
.cols {
  display: grid;
  grid-template-columns: 87px 196px 153px 136px 146px;
  height: 23px;
  font-family: "Liberation Sans", sans-serif;
  font-size: 13.33px;
  white-space: nowrap;
}
.cols span {
  padding-left: 1px;
  overflow: hidden;
  position: relative;
}
.headcols {
  background: #000;
  color: #fff;
  font-weight: bold;
  line-height: 18px;
  border-bottom: 1px solid #666;
}
.datacols {
  height: 20px;
  background: #fff;
  border-bottom: 1px solid #666;
  line-height: 19px;
}
.datacols span::before,
.datacols span::after {
  content: "";
  position: absolute;
  left: 0;
  width: 3px;
  height: 3px;
  border-left: 1px solid #000;
}
.datacols span::before {
  top: 0;
  border-top: 1px solid #000;
}
.datacols span::after {
  bottom: 0;
  border-bottom: 1px solid #000;
}
.datacols span:last-child {
  border-right: 1px solid #000;
}
.footer {
  height: 20px;
  display: flex;
  justify-content: flex-end;
  border-left: 1px solid #808080;
  border-top: 2px solid #000;
  margin-top: -1px;
}
.footcell {
  width: 76px;
  text-align: right;
  font: 13.33px/22px "Liberation Sans", sans-serif;
  background: linear-gradient(#000, #000) 0 0 / 1px 4px no-repeat;
}
.mainscroll {
  width: 16px;
  flex: none;
  padding-top: 9px;
  overflow: hidden;
}
.mainscroll .thumb {
  height: 67px;
  margin: 1px 0 198px;
}

/* right panel */
.rightpanel {
  width: 82px;
  flex: none;
  display: flex;
  flex-direction: column;
  overflow: hidden;
}
.rightpanel .panelgrip {
  height: 13px;
  background-position: 3px 4px;
}
.rightpanel .closebox {
  right: 1px;
}
.datatabs {
  height: 22px;
  flex: none;
  display: flex;
  align-items: flex-end;
  padding-left: 7px;
  background: repeating-conic-gradient(#f2f2f2 0 25%, #fbfbfb 0 50%) 0 0 / 2px 2px;
}
.datatabs .tab {
  width: 17.5px;
  height: 16px;
}
.databox {
  height: 230px;
  flex: none;
  margin-right: 1px;
  border: 1px solid #a0a0a0;
  display: flex;
  flex-direction: column;
}
.datatree {
  flex: 1;
  padding: 0 0 0 5px;
  overflow: hidden;
  white-space: nowrap;
}
.dnode {
  height: 16px;
  display: flex;
  align-items: center;
}
.dbi {
  width: 13px;
  height: 14px;
  flex: none;
  margin-right: 6px;
}
.query .chev {
  margin: 0 16px 0 2px;
  width: 6px;
  height: 6px;
}
.query .dbi {
  margin-right: 1px;
}
.field {
  padding-left: 38px;
  background: repeating-linear-gradient(90deg, #777 0 1px, transparent 1px 2px) 27px 50% / 11px 1px no-repeat, repeating-linear-gradient(#777 0 1px, transparent 1px 2px) 27px 0 / 1px 8px no-repeat;
}
.field:not(:last-child) {
  background: repeating-linear-gradient(90deg, #777 0 1px, transparent 1px 2px) 27px 50% / 11px 1px no-repeat, repeating-linear-gradient(#777 0 1px, transparent 1px 2px) 27px 0 / 1px 100% no-repeat;
}
.fieldi {
  width: 13px;
  height: 13px;
  flex: none;
  margin-right: 7px;
  border: 1px solid #7c9cc4;
  background: #fff;
  font: bold 11px/11px "Liberation Serif", serif;
  text-align: center;
  color: #111;
}
.datahscroll {
  height: 17px;
  flex: none;
  padding-left: 6px;
}
.datahscroll .thumb {
  width: 25px;
  margin: 0 24px 0 5px;
}
.checks {
  padding-top: 4px;
  white-space: nowrap;
  font-size: 10.4px;
}
.checks label {
  height: 16px;
  display: flex;
  align-items: center;
  gap: 3px;
}
.box {
  width: 13px;
  height: 13px;
  flex: none;
  border: 1px solid #333;
  position: relative;
}
.box.checked::after {
  content: "";
  position: absolute;
  left: 3px;
  top: 0;
  width: 5px;
  height: 9px;
  border-right: 1.5px solid #444;
  border-bottom: 1.5px solid #444;
  transform: rotate(40deg);
}

/* status and footer */
.statusbar {
  height: 20px;
  flex: none;
  display: flex;
  align-items: center;
  background: #f0f0f0;
  border-top: 1px solid #d0d0d0;
  border-bottom: 1px solid #fff;
}
.st-units {
  width: 75px;
  padding-left: 2px;
  font-weight: bold;
  font-size: 10px;
  text-shadow: 1px 0 0 #0a7a8a;
}
.st-pos {
  width: 229px;
  height: 100%;
  padding-left: 5px;
  display: flex;
  align-items: center;
  gap: 3px;
  border-left: 1px solid #d0d0d0;
  color: #334;
}
.st-page {
  height: 100%;
  display: flex;
  align-items: center;
  padding-left: 4px;
  border-left: 1px solid #d0d0d0;
  font-weight: bold;
  font-size: 10.5px;
}
.footerbar {
  height: 39px;
  flex: none;
  background: #f0f0f0;
  display: flex;
  align-items: flex-start;
  justify-content: flex-end;
  padding: 8px 9px 0 0;
}
.closebtn {
  width: 73px;
  height: 23px;
  background: #e1e1e1;
  border: 2px solid #0078d7;
  font: 11px "Noto Sans", sans-serif;
  color: #111;
  padding: 0;
}
```
